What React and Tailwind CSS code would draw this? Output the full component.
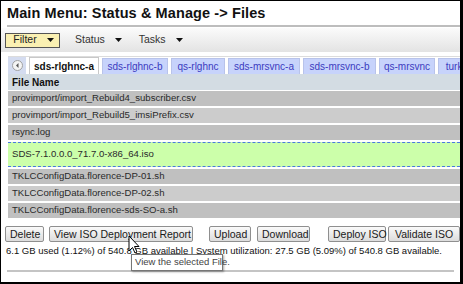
import { useState } from 'react';

const files = [
  { name: 'provimport/import_Rebuild4_subscriber.csv', bg: 'bg-[#c0c0c0]' },
  { name: 'provimport/import_Rebuild5_imsiPrefix.csv', bg: 'bg-[#cccccc]' },
  { name: 'rsync.log', bg: 'bg-[#c0c0c0]' },
  { name: 'SDS-7.1.0.0.0_71.7.0-x86_64.iso', bg: 'bg-[#ccffaa]', selected: true },
  { name: 'TKLCConfigData.florence-DP-01.sh', bg: 'bg-[#c0c0c0]' },
  { name: 'TKLCConfigData.florence-DP-02.sh', bg: 'bg-[#cccccc]' },
  { name: 'TKLCConfigData.florence-sds-SO-a.sh', bg: 'bg-[#c0c0c0]' },
];

const tabs = [
  { label: 'sds-rlghnc-a', w: 'w-[70px]' },
  { label: 'sds-rlghnc-b', w: 'w-[66px]' },
  { label: 'qs-rlghnc', w: 'w-[54px]' },
  { label: 'sds-mrsvnc-a', w: 'w-[72px]' },
  { label: 'sds-mrsvnc-b', w: 'w-[73px]' },
  { label: 'qs-mrsvnc', w: 'w-[56px]' },
  { label: 'turks-sds', w: 'w-[56px]' },
];

const Caret = () => (
  <svg width="7" height="4" viewBox="0 0 7 4" className="ml-[10px]">
    <path d="M0 0h7L3.5 4z" fill="#111" />
  </svg>
);

const Btn = ({ children, className = '' }) => (
  <button className={`h-[16px] px-[4px] border border-[#8f8f8f] rounded-[2px] bg-gradient-to-b from-[#fafafa] to-[#dcdcdc] text-[10.5px] leading-none text-[#1a1a1a] whitespace-nowrap ${className}`}>
    {children}
  </button>
);

const App = () => {
  const [active, setActive] = useState(0);

  return (
    <div className="relative w-[463px] h-[284px] overflow-hidden bg-white border-t border-l border-r-[3px] border-b-[2px] border-black font-['Liberation_Sans',Arial,sans-serif]">
      <div className="pl-[6px] pt-[4px]">
        <h1 className="text-[14.5px] font-bold leading-[17px] text-[#111] tracking-[0.1px]">
          Main Menu: Status &amp; Manage -&gt; Files
        </h1>
        <div className="mt-[3px] h-[2px] bg-[#bdbdbd]" />
      </div>

      {/* Toolbar */}
      <div className="mt-[1px] h-[24px] flex items-center pl-[4px] bg-gradient-to-b from-[#fbfbfb] to-[#e3e3e3]">
        <div className="h-[15px] w-[55px] pl-[2px] flex items-center justify-center border border-[#555] bg-[#faf0b2] text-[10.5px] text-[#222]">
          Filter <Caret />
        </div>
        <div className="ml-[15px] flex items-center text-[10.5px] text-[#333]">
          Status <Caret />
        </div>
        <div className="ml-[17px] flex items-center text-[10.5px] text-[#333]">
          Tasks <Caret />
        </div>
      </div>

      {/* Tabs */}
      <div className="mt-[4px] ml-[7px] border-t border-[#dcdcdc] flex items-end h-[18px] overflow-hidden whitespace-nowrap">
        <div className="h-[17px] w-[18px] flex items-center justify-center bg-[#d4dcf0] shrink-0">
          <svg width="11" height="11" viewBox="0 0 11 11">
            <circle cx="5.5" cy="5.5" r="5" fill="#f4f4f4" stroke="#a0a0a0" />
            <path d="M6.5 3L4 5.5 6.5 8z" fill="#555" />
          </svg>
        </div>
        {tabs.map((t, i) => (
          <div
            key={t.label}
            onClick={() => setActive(i)}
            className={`${t.w} h-[16px] ml-[3px] flex items-center justify-center text-[10px] shrink-0 border border-b-0 ${
              i === active
                ? 'bg-white border-[#c8c8c8] text-[#111] font-bold h-[17px] ml-[1px]'
                : 'bg-[#c7d3fb] border-[#b8c3ea] text-[#3b3bbf]'
            }`}
          >
            {t.label}
          </div>
        ))}
      </div>

      {/* File table */}
      <div className="ml-[7px] flex flex-col">
        <div className="h-[16px] flex items-center px-[4px] bg-[#d3dce3] text-[10px] font-bold text-[#111]">
          File Name
        </div>
        <div className="flex flex-col gap-[2px] pt-[1px]">
          {files.map((f) => (
            <div
              key={f.name}
              className={`flex items-center px-[4px] text-[9.6px] text-[#2a2a2a] ${f.bg} ${
                f.selected ? 'h-[25px] border-y border-dashed border-[#4a78e0]' : 'h-[15px]'
              }`}
            >
              {f.name}
            </div>
          ))}
        </div>
      </div>

      {/* Buttons */}
      <div className="mt-[8px] ml-[4px] flex items-center">
        <Btn className="w-[39px]">Delete</Btn>
        <Btn className="ml-[5px] w-[144px]">View ISO Deployment Report</Btn>
        <Btn className="ml-[16px] w-[42px]">Upload</Btn>
        <Btn className="ml-[6px] w-[53px]">Download</Btn>
        <Btn className="ml-[18px] w-[58px]">Deploy ISO</Btn>
        <Btn className="ml-[2px] w-[73px]">Validate ISO</Btn>
      </div>

      <div className="mt-[3px] ml-[5px] text-[9.5px] leading-[12px] text-[#111] whitespace-nowrap">
        6.1 GB used (1.12%) of 540.8 GB available | System utilization: 27.5 GB (5.09%) of 540.8 GB available.
      </div>

      <div className="mt-[13px] mx-[6px] h-[2px] bg-[#c4c4c4]" />

      {/* Tooltip + cursor */}
      <div className="absolute left-[130px] top-[253px] h-[17px] w-[92px] px-[3px] flex items-center border border-[#767676] bg-white text-[9.5px] text-[#444] whitespace-nowrap shadow-[1px_1px_2px_rgba(0,0,0,0.35)]">
        View the selected File.
      </div>
      <svg className="absolute left-[127px] top-[234px]" width="12" height="19" viewBox="0 0 12 19">
        <path d="M1 1v15l3.5-3.5 2.5 5.5 2-1-2.5-5.5H11z" fill="#fff" stroke="#000" strokeWidth="1" strokeLinejoin="round" />
      </svg>
    </div>
  );
};

export default App;
